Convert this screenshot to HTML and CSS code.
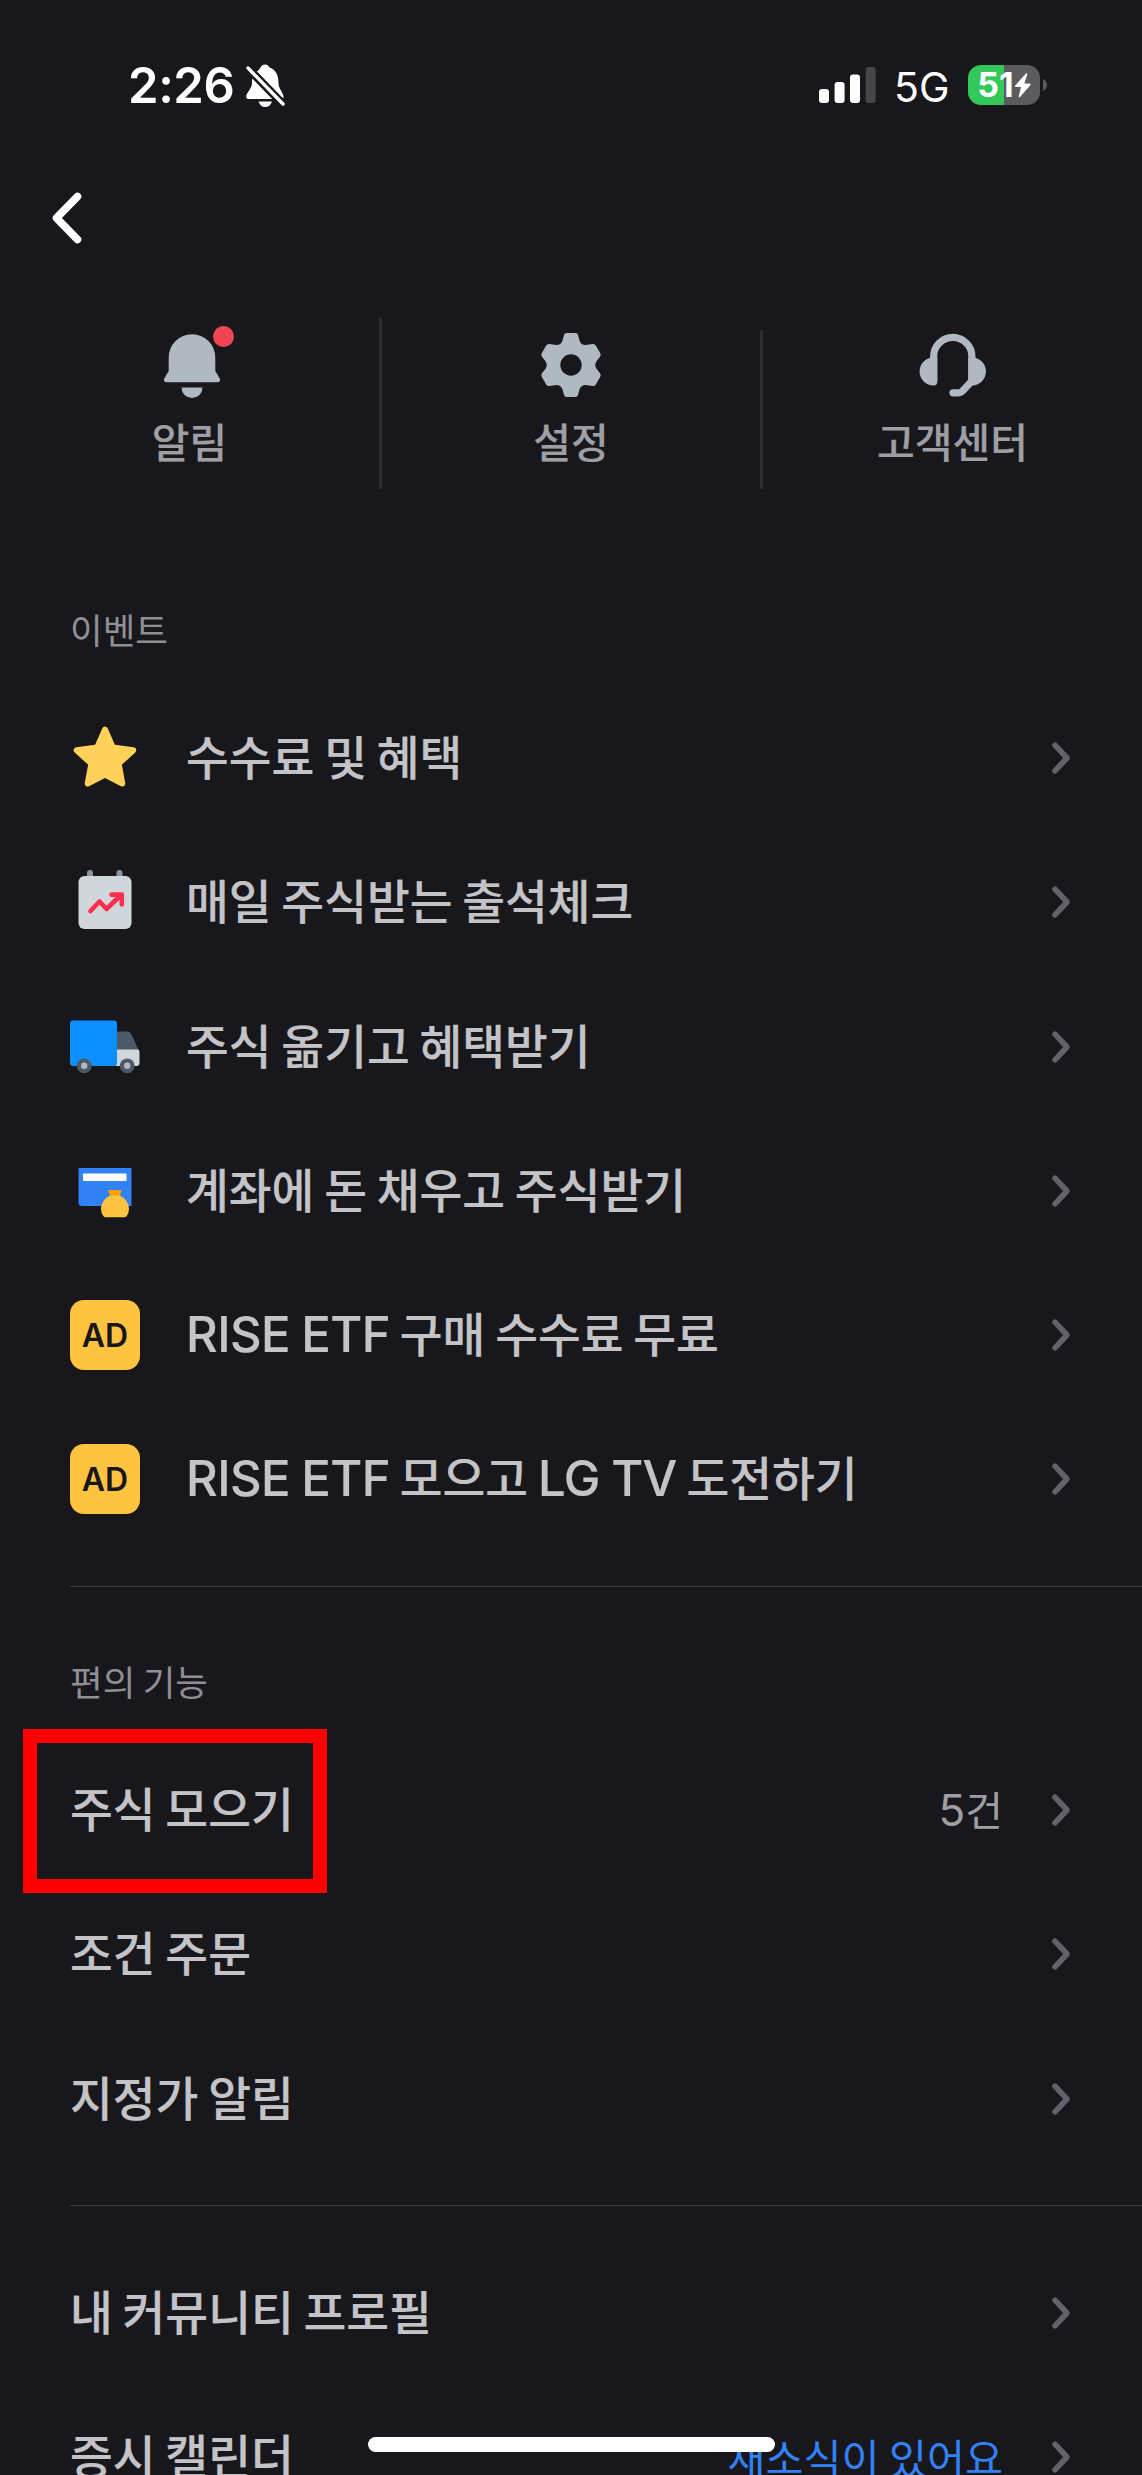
FILE: index.html
```
<!DOCTYPE html>
<html lang="ko">
<head>
<meta charset="utf-8">
<title>메뉴</title>
<link rel="stylesheet" href="styles.css">
</head>
<body>
<svg class="defs" width="0" height="0" aria-hidden="true">
  <symbol id="chevron" viewBox="0 0 20 34"><path d="M4 4.200L16 17L4 29.800" fill="none" stroke="#62626d" stroke-width="5.600" stroke-linecap="round" stroke-linejoin="round"/></symbol>
</svg>
<main class="screen">
  <header class="status">
    <span class="clock">2:26</span>
    <svg class="silent" viewBox="0 0 40 44" width="40" height="44"><path d="M12 8.500Q14.500 6.500 15.500 4.600Q17 1.500 20 1.500Q23 1.500 24.500 4.600C31 7 33.500 12.500 33.500 20C33.500 26 38.500 29.500 38.500 34Q38.500 34.800 38 35.300ZM7.300 15.600L27.200 36H3.500Q1.200 36 1.200 33.500C1.500 29.500 6.800 26 7 20Q7 17.500 7.300 15.600ZM13.500 38.500H27Q25 44 20.200 44Q15.500 44 13.500 38.500Z" fill="#fff"/><path d="M3 5L38 41" stroke="#fff" stroke-width="3.400" stroke-linecap="round"/></svg>
    <svg class="signal" viewBox="0 0 57 36" width="57" height="36"><g fill="#fff"><rect x="0" y="22" width="10" height="14" rx="3"/><rect x="15.600" y="15" width="10" height="21" rx="3"/><rect x="31" y="7.500" width="10" height="28.500" rx="3"/></g><rect x="46.700" y="0" width="10" height="36" rx="3" fill="#464549"/></svg>
    <span class="network">5G</span>
    <span class="battery"><span class="percent">51</span><svg viewBox="0 0 16 25" width="17" height="25"><path d="M11.500 .5L.6 12.600Q.2 14 1.500 14H6.500L4.200 23.500Q4.200 25 5.500 24L15.800 12.200Q16.400 10.600 15 10.500H9.800L12.800 1.400Q12.800 0 11.500 .5Z" fill="#fff"/></svg></span>
    <svg class="nub" viewBox="0 0 4 12" width="4" height="12"><path d="M0 0Q4 1.800 4 6T0 12Z" fill="#5b5a5f"/></svg>
  </header>
  <nav class="back"><svg viewBox="0 0 30 52" width="30" height="52"><path d="M25.500 4.500L4.500 26L25.500 47.500" fill="none" stroke="#fff" stroke-width="7.600" stroke-linecap="round" stroke-linejoin="round"/></svg></nav>
  <section class="shortcuts">
    <a class="shortcut bell"><svg viewBox="0 0 72 72" width="72" height="72"><g fill="#b0b8c1"><path d="M12.700 28.500A23.300 23.300 0 0 1 59.300 28.500V42L63.800 49.500Q65 53 61.500 53.300H10.500Q7 53 8.200 49.500L12.700 42Z"/><path d="M25.500 58.500H46.500A10.500 10.500 0 0 1 25.500 58.500Z"/></g></svg><i class="dot"></i><span>알림</span></a>
    <a class="shortcut gear"><svg viewBox="0 0 72 72" width="72" height="72"><path fill="#b0b8c1" fill-rule="evenodd" d="M31.500 4H40.500Q42.500 4 43 6L44.500 11.500Q46 16 50.500 16L57.500 15Q59.700 14.600 60.800 16.500L65.300 24.300Q66.300 26.200 65 27.800L61.500 32.200Q59 36 61.500 39.800L65 44.200Q66.300 45.800 65.300 47.700L60.800 55.500Q59.700 57.400 57.500 57L50.500 56Q46 56 44.500 60.500L43 66Q42.500 68 40.500 68H31.500Q29.500 68 29 66L27.500 60.500Q26 56 21.500 56L14.500 57Q12.300 57.400 11.200 55.500L6.700 47.700Q5.700 45.800 7 44.200L10.500 39.800Q13 36 10.500 32.200L7 27.800Q5.700 26.200 6.700 24.300L11.200 16.500Q12.300 14.600 14.500 15L21.500 16Q26 16 27.500 11.500L29 6Q29.500 4 31.500 4ZM36 25.300A10.700 10.700 0 1 0 36 46.700A10.700 10.700 0 1 0 36 25.300Z"/></svg><span>설정</span></a>
    <a class="shortcut help"><svg viewBox="0 0 72 72" width="72" height="72"><g fill="#b0b8c1"><path d="M18.300 27.500V52Q18 55.700 14.600 55.500A14 14 0 0 1 14.600 27.500Z"/><path d="M49.300 27.500H52.900A14 14 0 0 1 52.900 55.500L49.300 54Z"/></g><path d="M14.700 50V26.500A19.100 19.100 0 0 1 52.900 26.500V51L44 60.500Q42 62.800 39.500 62.800H34" fill="none" stroke="#b0b8c1" stroke-width="7.200" stroke-linecap="round" stroke-linejoin="round"/></svg><span>고객센터</span></a>
  </section>
  <section class="group events">
    <h2>이벤트</h2>
    <a class="row"><svg class="icon" viewBox="0 0 70 70" width="70" height="70"><path fill="#ffd158" stroke="#ffd158" stroke-width="6" stroke-linejoin="round" d="M35 6.700L42.800 24.500L63.300 27.200L48.600 40.600L52.300 60.500L35 51.500L17.700 60.500L21.400 40.600L6.700 27.200L27.200 24.500Z"/></svg><span class="label">수수료 및 혜택</span><svg class="go"><use href="#chevron"/></svg></a>
    <a class="row"><svg class="icon" viewBox="0 0 70 70" width="70" height="70"><path d="M20 6V11M49.500 6V11" stroke="#8b95a1" stroke-width="6" stroke-linecap="round"/><rect x="8.500" y="9" width="53" height="53" rx="6" fill="#d1d6db"/><path d="M20.500 44L29.500 34.500L36.500 42L51 28M41.500 27.600H51.800V37.500" fill="none" stroke="#ff2e4f" stroke-width="4.600" stroke-linecap="round" stroke-linejoin="round"/></svg><span class="label">매일 주식받는 출석체크</span><svg class="go"><use href="#chevron"/></svg></a>
    <a class="row"><svg class="icon" viewBox="0 0 70 70" width="70" height="70"><path d="M46 19.500H57Q60 19.500 61.500 22.500L69 39H46Z" fill="#4e5968"/><path d="M46 37.500H68.500Q69.500 38.500 69.500 41V51Q69.500 54 66.500 54H46Z" fill="#d1d6db"/><rect x="0" y="8.500" width="47" height="45.500" rx="3" fill="#0d90ff"/><g fill="#4e5968"><circle cx="14.200" cy="53.800" r="7.400"/><circle cx="57.200" cy="53.800" r="7.400"/></g><g fill="#b0b8c1"><circle cx="14.200" cy="53.800" r="3.200"/><circle cx="57.200" cy="53.800" r="3.200"/></g></svg><span class="label">주식 옮기고 혜택받기</span><svg class="go"><use href="#chevron"/></svg></a>
    <a class="row"><svg class="icon" viewBox="0 0 70 70" width="70" height="70"><path d="M9.500 12H60.500Q61.500 12 61.500 13V50H12Q8.500 50 8.500 46.500V13Q8.500 12 9.500 12Z" fill="#3182f6"/><rect x="13" y="17.500" width="43.500" height="7.500" rx=".8" fill="#fff"/><path d="M38.500 34H51Q51.500 34 51.300 35L49.500 41H40.500L38.200 35Q38 34 38.500 34Z" fill="#ff9f00"/><path d="M40.500 39.500H49.500C55 42 59 47 59 53Q59 57.500 56.500 60.200Q55.800 61.200 54 61.200H36Q34.200 61.200 33.500 60.200Q31 57.500 31 53C31 47 35 42 40.500 39.500Z" fill="#ffc342"/></svg><span class="label">계좌에 돈 채우고 주식받기</span><svg class="go"><use href="#chevron"/></svg></a>
    <a class="row"><span class="icon ad">AD</span><span class="label"><span class="latin">RISE ETF</span> 구매 수수료 무료</span><svg class="go"><use href="#chevron"/></svg></a>
    <a class="row"><span class="icon ad">AD</span><span class="label"><span class="latin">RISE ETF</span> 모으고 <span class="latin">LG TV</span> 도전하기</span><svg class="go"><use href="#chevron"/></svg></a>
  </section>
  <section class="group tools">
    <h2>편의 기능</h2>
    <a class="row marked"><span class="label">주식 모으기</span><span class="value"><span class="count">5</span>건</span><svg class="go"><use href="#chevron"/></svg></a>
    <a class="row"><span class="label">조건 주문</span><svg class="go"><use href="#chevron"/></svg></a>
    <a class="row"><span class="label">지정가 알림</span><svg class="go"><use href="#chevron"/></svg></a>
  </section>
  <section class="group more">
    <a class="row"><span class="label">내 커뮤니티 프로필</span><svg class="go"><use href="#chevron"/></svg></a>
    <a class="row"><span class="label">증시 캘린더</span><span class="value news">새소식이 있어요</span><svg class="go"><use href="#chevron"/></svg></a>
  </section>
  <div class="home"></div>
</main>
</body>
</html>
```
FILE: styles.css
```
*, *::before { box-sizing: border-box; }
body { margin: 0; background: #18171c; font-family: Inter, "Noto Sans CJK KR", sans-serif; }
.defs { position: absolute; }
.screen { position: relative; width: 1142px; height: 2475px; overflow: hidden; background: #18171c; color: #c4c4c8; }

.status { display: flex; align-items: center; height: 170px; padding: 0 95px 0 128px; color: #fff; }
.clock { width: 117px; padding-top: 1px; font-size: 49px; font-weight: 600; line-height: 60px; letter-spacing: -.4px; white-space: nowrap; }
.silent { margin-right: auto; }
.signal { margin-right: 18px; }
.network { width: 74px; padding-top: 3px; font-size: 41px; line-height: 60px; white-space: nowrap; }
.battery { display: flex; align-items: center; justify-content: center; width: 72px; height: 40px; border-radius: 13px; background: linear-gradient(90deg, #34c759 36.500px, #5b5a5f 36.500px); }
.percent { font-size: 34px; font-weight: 700; line-height: 40px; }
.nub { margin-left: 3px; }

.back { height: 148px; padding: 22px 0 0 52px; }

.shortcuts { display: grid; grid-template-columns: 379px 381px 1fr; height: 171px; }
.shortcut { position: relative; display: flex; flex-direction: column; align-items: center; gap: 12px; padding-top: 11px; color: #9e9ea4; font-size: 41px; font-weight: 500; }
.shortcut + .shortcut { border-left: 3px solid #2c2c35; }
.shortcut.help { margin-top: 12px; padding-top: 0; gap: 11px; }
.shortcut.bell svg { margin-left: 4px; }
.shortcut.help svg { margin-left: 5px; }
.shortcut span { line-height: 60px; white-space: nowrap; -webkit-text-stroke: .2px; }
.dot { position: absolute; left: 213px; top: 8px; width: 21px; height: 21px; border-radius: 50%; background: #f04452; }

.group { margin-left: 70px; }
.group + .group { border-top: 1px solid #3a3a42; }
.events { padding: 115.700px 0 34.300px; }
.tools { padding: 70px 0 34px; }
.more { padding-top: 35px; }
h2 { margin: 0; height: 81px; font-size: 35.500px; font-weight: 400; line-height: 54px; word-spacing: -2.600px; color: #8f8f96; }
.row { display: flex; align-items: center; height: 144.330px; padding-right: 71px; }
.icon { width: 70px; height: 70px; margin-right: 46px; }
.ad { display: flex; align-items: center; justify-content: center; border-radius: 14px; background: #ffc342; color: #18171c; font-size: 32px; font-weight: 600; }
.label { margin-right: auto; font-size: 46.500px; font-weight: 500; line-height: 70px; word-spacing: -2.600px; white-space: nowrap; -webkit-text-stroke: .2px; }
.latin { font-size: 49px; letter-spacing: -.6px; word-spacing: -1px; line-height: 1; }
.value { margin-right: 48px; padding-top: 1px; font-size: 41px; line-height: 60px; word-spacing: -2px; color: #9e9ea4; white-space: nowrap; }
.count { font-size: 44px; line-height: 1; }
.news { padding-top: 4px; font-size: 41.300px; color: #3182f6; }
.go { width: 20px; height: 34px; }
.marked { position: relative; }
.marked::before { content: ""; position: absolute; left: -47px; top: -9px; width: 304px; height: 164px; border: 14px solid #f00; }
.home { position: absolute; left: 368px; top: 2437px; width: 407px; height: 15px; border-radius: 8px; background: #fff; }
```
